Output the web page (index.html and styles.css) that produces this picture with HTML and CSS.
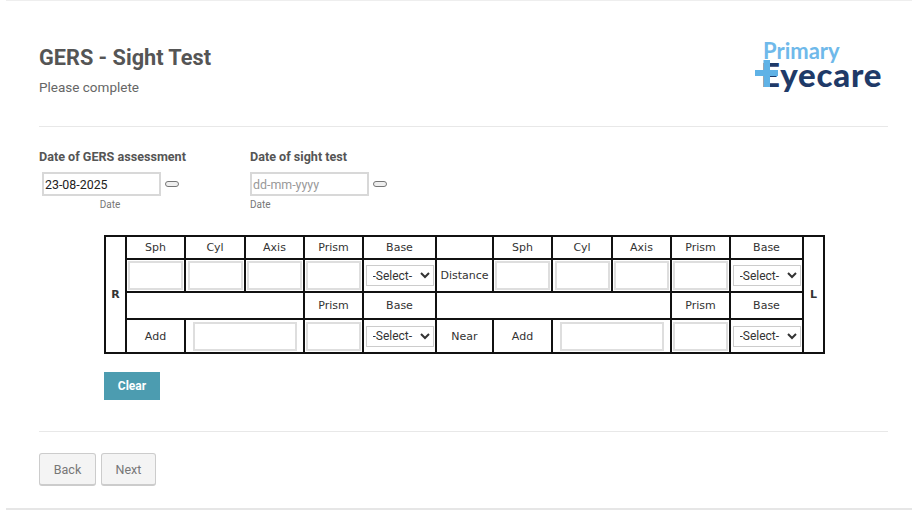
FILE: index.html
```html
<!DOCTYPE html>
<html>
<head>
    <title>GERS - Sight Test</title>
    <link rel="stylesheet" href="styles.css">
</head>
<body>
    <div class="panel">
        <div class="header">
            <div>
                <h1>GERS - Sight Test</h1>
                <p class="subtitle">Please complete</p>
            </div>
            <div class="logo">
                <div class="logo-top">Primary</div>
                <div class="logo-word">Eyecare</div>
                <svg class="logo-plus" width="24" height="28" viewBox="0 0 24 28">
                    <path d="M0 10h23v6H0zM8.500 0h6.500v27H8.500z" fill="#5fb2e6"/>
                </svg>
            </div>
        </div>

        <div class="dates">
            <div class="date-field first">
                <label>Date of GERS assessment</label>
                <div class="date-row">
                    <input class="date-input" type="text" value="23-08-2025">
                    <button class="pill" type="button"></button>
                </div>
                <div class="hint hint-center">Date</div>
            </div>
            <div class="date-field">
                <label>Date of sight test</label>
                <div class="date-row">
                    <input class="date-input" type="text" placeholder="dd-mm-yyyy">
                    <button class="pill" type="button"></button>
                </div>
                <div class="hint">Date</div>
            </div>
        </div>

        <table class="rx">
            <colgroup>
                <col class="c-side">
                <col class="c-num"><col class="c-cyl"><col class="c-num"><col class="c-num">
                <col class="c-base">
                <col class="c-mid">
                <col class="c-num"><col class="c-cyl"><col class="c-num"><col class="c-num">
                <col class="c-base">
                <col class="c-side">
            </colgroup>
            <tr class="r-head">
                <td rowspan="4" class="side">R</td>
                <td>Sph</td><td>Cyl</td><td>Axis</td><td>Prism</td><td>Base</td>
                <td></td>
                <td>Sph</td><td>Cyl</td><td>Axis</td><td>Prism</td><td>Base</td>
                <td rowspan="4" class="side">L</td>
            </tr>
            <tr class="r-input">
                <td><input type="text"></td><td><input type="text"></td><td><input type="text"></td><td><input type="text"></td>
                <td><select><option>-Select-</option></select></td>
                <td>Distance</td>
                <td><input type="text"></td><td><input type="text"></td><td><input type="text"></td><td><input type="text"></td>
                <td><select><option>-Select-</option></select></td>
            </tr>
            <tr class="r-sub">
                <td colspan="3"></td><td>Prism</td><td>Base</td>
                <td colspan="4"></td><td>Prism</td><td>Base</td>
            </tr>
            <tr class="r-add">
                <td>Add</td>
                <td colspan="2"><input class="wide" type="text"></td>
                <td><input type="text"></td>
                <td><select><option>-Select-</option></select></td>
                <td>Near</td>
                <td>Add</td>
                <td colspan="2"><input class="wide" type="text"></td>
                <td><input type="text"></td>
                <td><select><option>-Select-</option></select></td>
            </tr>
        </table>

        <button class="btn-clear" type="button">Clear</button>

        <div class="footer">
            <button class="btn" type="button">Back</button>
            <button class="btn" type="button">Next</button>
        </div>
    </div>
</body>
</html>
```

FILE: styles.css
```css
* {
    box-sizing: border-box;
}

body {
    margin: 0;
    background: white;
    font-family: 'Roboto', sans-serif;
    color: #555;
}

.panel {
    height: 510px;
    margin: 0 6px;
    padding: 0 24px 0 33px;
    border-top: 1px solid #eee;
    border-bottom: 2px solid #e6e6e6;
}

.header {
    height: 126px;
    display: flex;
    justify-content: space-between;
    border-bottom: 1px solid #e8e8e8;
}

h1 {
    margin: 44px 0 0;
    font-size: 21.700px;
    line-height: 26px;
    font-weight: 700;
    color: #555;
}

.subtitle {
    margin: 7px 0 0;
    font-size: 13.500px;
    line-height: 18px;
    color: #666;
}

.logo {
    position: relative;
    margin: 37px 5px 0 0;
    width: 128px;
    font-family: 'Lato', sans-serif;
}

.logo-top {
    margin-left: 8px;
    font-size: 22px;
    line-height: 26px;
    font-weight: 700;
    color: #6fb9ea;
}

.logo-word {
    margin: -5px 0 0 6px;
    font-size: 33px;
    line-height: 30px;
    font-weight: 900;
    letter-spacing: 0.8px;
    color: #1f3a68;
}

/* sits over the stem of the E, as in the logo */
.logo-plus {
    position: absolute;
    left: 0;
    top: 22px;
}

.dates {
    display: flex;
    margin-top: 22px;
}

.date-field {
    width: 211px;
}

.date-field label {
    display: block;
    font-size: 12.600px;
    line-height: 16px;
    font-weight: 700;
    color: #555;
}

.date-row {
    display: flex;
    align-items: center;
    margin-top: 7px;
}

.date-field.first .date-row {
    margin-left: 3px;
}

.date-input {
    width: 119px;
    height: 24px;
    padding: 0 1px;
    border: 2px solid #d8d8d8;
    font-family: 'Roboto', sans-serif;
    font-size: 12.400px;
    color: #222;
}

.date-input::placeholder {
    color: #999;
}

.pill {
    width: 14px;
    height: 6px;
    margin-left: 4px;
    padding: 0;
    background: #efefef;
    border: 1px solid #777;
    border-radius: 3px;
}

.hint {
    margin-top: 3px;
    font-size: 10px;
    line-height: 12px;
    color: #777;
}

.hint-center {
    width: 142px;
    text-align: center;
}

.rx {
    margin: 24px 0 0 65px;
    width: 719px;
    table-layout: fixed;
    border-collapse: collapse;
    border: 2px solid #111;
    font-family: 'DejaVu Sans', sans-serif;
    font-size: 11px;
    color: #333;
}

.rx td {
    padding: 0;
    border: 2px solid #111;
    text-align: center;
    vertical-align: middle;
}

.c-side { width: 21px; }
.c-num { width: 59px; }
.c-cyl { width: 60px; }
.c-base { width: 73px; }
.c-mid { width: 57px; }

.r-head { height: 23px; }
.r-input { height: 33px; }
.r-sub { height: 27px; }
.r-add { height: 34px; }

.rx .side {
    font-weight: 700;
}

.rx input {
    display: block;
    width: 55px;
    height: 29px;
    margin: 0 auto;
    border: 2px solid #dedede;
    background: white;
}

.rx input.wide {
    width: 104px;
}

.rx select {
    display: block;
    width: 68px;
    height: 21px;
    margin: 0 auto;
    padding: 0 0 0 2px;
    background: white;
    border: 1px solid #ccc;
    font-family: 'Roboto', sans-serif;
    font-size: 12px;
    color: #333;
}

.btn-clear {
    display: block;
    width: 56px;
    height: 28px;
    margin: 18px 0 0 65px;
    padding: 0;
    background: #4c9cb0;
    border: none;
    color: white;
    font-family: 'Roboto', sans-serif;
    font-size: 12px;
    font-weight: 700;
}

.footer {
    display: flex;
    gap: 5px;
    margin-top: 31px;
    padding-top: 21px;
    border-top: 1px solid #e8e8e8;
}

.btn {
    width: 57px;
    height: 33px;
    padding: 0;
    background: #f4f4f4;
    border: 1px solid #ccc;
    border-bottom-width: 2px;
    border-radius: 3px;
    color: #777;
    font-family: 'Roboto', sans-serif;
    font-size: 12.500px;
}

.btn + .btn {
    width: 55px;
}
```
